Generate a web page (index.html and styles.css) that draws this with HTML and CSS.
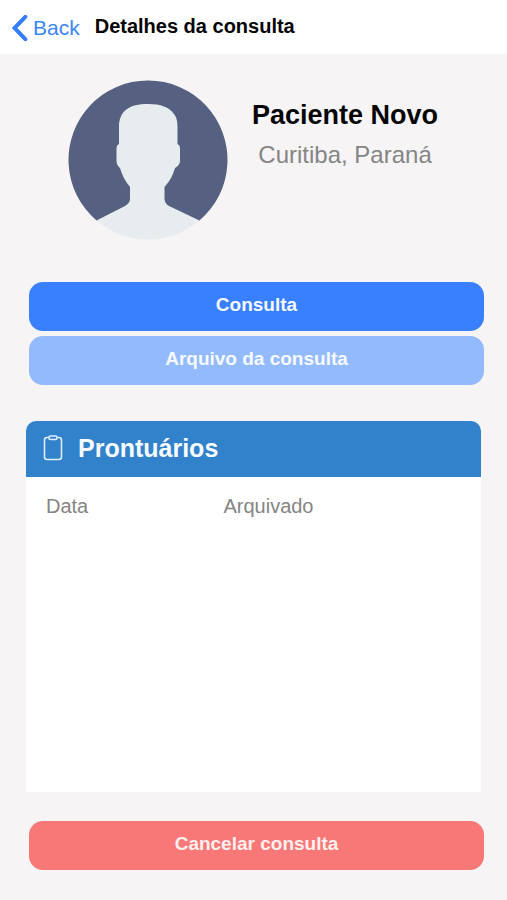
FILE: index.html
```html
<!DOCTYPE html>
<html lang="pt-BR">
<head>
<meta charset="utf-8">
<meta name="viewport" content="width=device-width, initial-scale=1">
<title>Detalhes da consulta</title>
<link rel="stylesheet" href="styles.css">
</head>
<body>
<header class="topbar">
  <a class="back" href="#">
    <svg class="back-icon" viewBox="0 0 16 28" aria-hidden="true"><path d="M13.300 2.800 2.500 14 13.300 25.200"/></svg>
    <span>Back</span>
  </a>
  <h1 class="title">Detalhes da consulta</h1>
</header>
<main class="content">
  <section class="profile">
    <svg class="avatar" viewBox="0 0 160 160" aria-hidden="true">
      <defs><clipPath id="disc"><circle cx="80" cy="80" r="79.500"/></clipPath></defs>
      <path class="avatar-bg" d="M28.500 140.500A79.500 79.500 0 1 1 131.500 140.500Z"/>
      <path class="avatar-person" clip-path="url(#disc)" d="M80 24C93 24 101 27 106 34C109 38 109.500 42 109.500 48V64Q112 65 112 68V81Q112 85 107 88C105 95 102 101 96.500 107V119Q97 124 101 126L131.500 140.500V160H28.500V140.500L57 126Q62 123 62 119V107C57 101 54 95 52 88Q48.500 85 48.500 81V68Q48.500 65 51 64V47C51 31 61 24 80 24Z"/>
    </svg>
    <div class="identity">
      <h2 class="name">Paciente Novo</h2>
      <p class="city">Curitiba, Paraná</p>
    </div>
  </section>
  <div class="actions">
    <button class="btn btn-primary" type="button">Consulta</button>
    <button class="btn btn-light" type="button">Arquivo da consulta</button>
  </div>
  <section class="card">
    <div class="card-head">
      <svg class="clipboard" viewBox="0 0 20 26" aria-hidden="true"><rect x="1.500" y="2.500" width="17" height="22" rx="2.500"/><rect class="clip" x="6" y="1" width="8" height="3.500" rx="1.500"/></svg>
      <h2 class="card-title">Prontuários</h2>
    </div>
    <table class="records">
      <thead><tr><th scope="col">Data</th><th scope="col">Arquivado</th></tr></thead>
      <tbody></tbody>
    </table>
  </section>
  <div class="actions">
    <button class="btn btn-danger" type="button">Cancelar consulta</button>
  </div>
</main>
</body>
</html>
```
FILE: styles.css
```css
* { box-sizing: border-box; }

body {
  margin: 0;
  min-height: 100vh;
  display: flex;
  flex-direction: column;
  background: #f6f4f5;
  color: #050505;
  font-family: "Liberation Sans", Arial, sans-serif;
}

h1, h2, p { margin: 0; }

.topbar {
  display: flex;
  align-items: center;
  gap: 15px;
  height: 54px;
  padding: 0 12px;
  background: #fff;
}

.back {
  display: flex;
  align-items: center;
  gap: 5px;
  padding-top: 2px;
  color: #3d85fb;
  font-size: 21px;
  line-height: 24px;
  text-decoration: none;
}

.back-icon {
  width: 16px;
  height: 28px;
  fill: none;
  stroke: #357dff;
  stroke-width: 4;
  stroke-linecap: round;
}

.title {
  padding-bottom: 2px;
  font-size: 20px;
  line-height: 24px;
}

.content {
  flex: 1;
  display: flex;
  flex-direction: column;
  padding: 26px 26px 30px;
}

.profile {
  display: flex;
  gap: 24px;
  padding: 0 42px 42px;
}

.avatar { flex: none; width: 160px; height: 160px; }
.avatar-bg { fill: #566080; }
.avatar-person { fill: #e7ecee; }

.identity {
  padding-top: 19px;
  text-align: center;
  white-space: nowrap;
}

.name { font-size: 27px; line-height: 32px; }

.city {
  margin-top: 8px;
  color: #858585;
  font-size: 24px;
  line-height: 32px;
}

.actions {
  display: flex;
  flex-direction: column;
  gap: 5px;
  margin-left: 3px;
  margin-right: -3px;
}

.btn {
  height: 49px;
  padding: 0 16px 4px;
  border: 0;
  border-radius: 14px;
  color: #f6faff;
  font: bold 19px/24px "Liberation Sans", Arial, sans-serif;
}

.btn-primary { background: #3880ff; }
.btn-light { background: #92bafc; }
.btn-danger { background: #f87878; color: #fff0ef; }

.card {
  flex: 1;
  margin: 36px 0 29px;
  border-radius: 10px 10px 0 0;
  overflow: hidden;
  background: #fff;
}

.card-head {
  display: flex;
  align-items: center;
  gap: 15px;
  height: 56px;
  padding: 0 17px 2px;
  background: #3182ca;
  color: #f6fbff;
}

.clipboard {
  width: 20px;
  height: 26px;
  fill: none;
  stroke: #dcedff;
  stroke-width: 1.6;
}

.clip { fill: #3182ca; }

.card-title { font-size: 25px; line-height: 32px; }

.records {
  width: 100%;
  margin-top: 17px;
  border-collapse: collapse;
  table-layout: fixed;
}

.records th {
  padding: 0 0 0 20px;
  color: #858585;
  font-size: 20px;
  font-weight: normal;
  line-height: 24px;
  text-align: left;
}

.records th:first-child { width: 39%; }
```
